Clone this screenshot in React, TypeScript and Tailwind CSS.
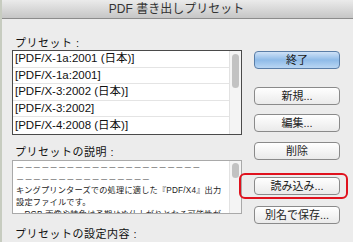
import React from "react";

const presets = [
  "[PDF/X-1a:2001 (日本)]",
  "[PDF/X-1a:2001]",
  "[PDF/X-3:2002 (日本)]",
  "[PDF/X-3:2002]",
  "[PDF/X-4:2008 (日本)]",
];

const font = { fontFamily: '"Liberation Sans", "Noto Sans CJK JP", sans-serif' };

function Btn({ label, primary, className = "" }: { label: string; primary?: boolean; className?: string }) {
  return (
    <div
      className={`relative h-[18px] w-[86px] rounded-[4px] border flex items-center justify-center text-[11px] leading-none ${
        primary
          ? "border-[#5a7ea8] bg-gradient-to-b from-[#cfe2f7] via-[#8fbbe8] to-[#b9d6f3] text-[#1a1a1a]"
          : "border-[#8a8a8a] bg-gradient-to-b from-white to-[#eaeaea] text-[#222]"
      } ${className}`}
    >
      {label}
    </div>
  );
}

export default function App() {
  return (
    <div className="w-[353px] h-[242px] overflow-hidden bg-[#ececec] flex" style={font}>
      {/* 左端の影 */}
      <div className="w-[2px] bg-[#c7ccc0]" />
      <div className="flex-1 flex flex-col">
        {/* タイトルバー */}
        <div className="h-[19px] shrink-0 bg-gradient-to-b from-[#ebebeb] to-[#c6c6c6] border-b border-[#8c8c8c] flex items-center justify-center text-[12px] text-[#333] pr-[2px]">
          PDF 書き出しプリセット
        </div>

        <div className="flex pl-[10px]">
          {/* 左側 */}
          <div className="w-[230px] flex flex-col">
            <div className="h-[31px] pt-[17px] text-[11px] leading-[14px] text-[#111] pl-[3px] tracking-[0.5px]">プリセット :</div>
            <div className="h-[85px] border border-[#4a4a4a] bg-white flex">
              <div className="flex-1 flex flex-col">
                {presets.map((p) => (
                  <div
                    key={p}
                    className="h-[16.6px] border-b border-[#e4e4e4] last:border-b-0 flex items-center pl-[2px] text-[11.5px] text-[#111] leading-none"
                  >
                    {p}
                  </div>
                ))}
              </div>
              <div className="w-[12px] bg-[#f4f4f4] border-l border-[#e2e2e2] pt-[3px] flex justify-center">
                <div className="w-[7px] h-[34px] rounded-full bg-[#c2c2c2]" />
              </div>
            </div>

            <div className="h-[25px] pt-[10px] text-[11px] leading-[14px] text-[#111] pl-[3px] tracking-[0.5px]">プリセットの説明 :</div>
            <div className="h-[54px] border border-[#a9a9a9] bg-white flex overflow-hidden">
              <div className="flex-1 pl-[3px] pt-[1px] text-[8.2px] leading-[11.7px] text-[#222] tracking-[0.2px] overflow-hidden">
                <div className="text-[#555] whitespace-nowrap">－－－－－－－－－－－－－－－－－－－－－－</div>
                <div className="text-[#555] whitespace-nowrap">－－－－－－－－－－－－－－－－</div>
                <div className="whitespace-nowrap">キングプリンターズでの処理に適した『PDF/X4』出力</div>
                <div className="whitespace-nowrap">設定ファイルです。</div>
                <div className="whitespace-nowrap">・RGB 画像や特色は予期せぬ仕上がりとなる可能性が</div>
              </div>
              <div className="w-[12px] bg-[#f4f4f4] border-l border-[#e2e2e2] pt-[2px] flex justify-center">
                <div className="w-[7px] h-[15px] rounded-full bg-[#c2c2c2]" />
              </div>
            </div>

            <div className="h-[28px] pt-[13px] text-[11px] leading-[14px] text-[#111] pl-[3px] tracking-[0.5px]">プリセットの設定内容 :</div>
            <div className="h-[10px] border border-[#a9a9a9] bg-white" />
          </div>

          {/* 右側ボタン */}
          <div className="flex flex-col pl-[12px] pt-[32px]">
            <Btn label="終了" primary />
            <Btn label="新規..." className="mt-[18px]" />
            <Btn label="編集..." className="mt-[9px]" />
            <Btn label="削除" className="mt-[10px]" />
            <div className="relative mt-[17px]">
              <Btn label="読み込み..." />
              <div className="absolute -left-[15px] -right-[8px] -top-[4px] -bottom-[4px] border-2 border-[#e0121e] rounded-[6px]" />
            </div>
            <Btn label="別名で保存..." className="mt-[11px]" />
          </div>
        </div>
      </div>
    </div>
  );
}
